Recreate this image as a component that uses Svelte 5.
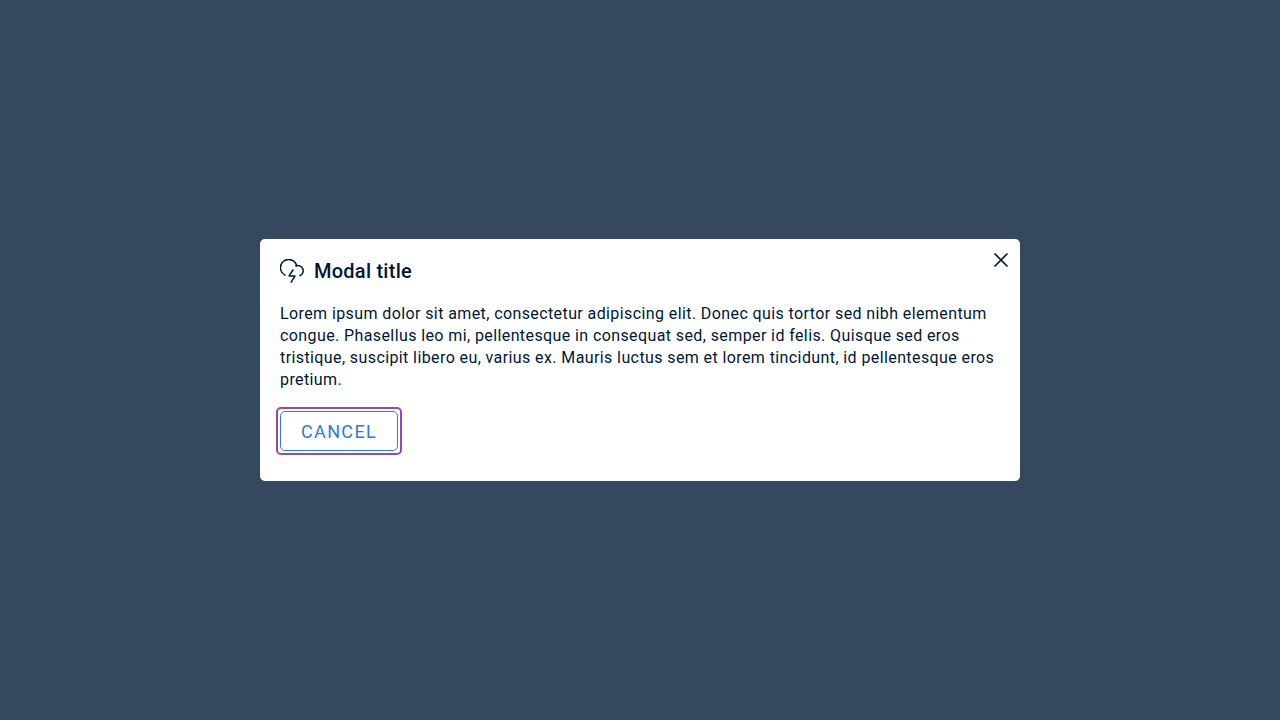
<script>
  let open = $state(true);
  const close = () => (open = false);
</script>

<div class="overlay">
  {#if open}
    <div class="modal" role="dialog" aria-modal="true" aria-labelledby="modal-title">
      <button class="close" type="button" aria-label="Close" onclick={close}>
        <svg width="24" height="24" viewBox="0 0 24 24" fill="none" stroke="currentColor" stroke-width="1.7" stroke-linecap="round">
          <path d="M6 6 18 18M18 6 6 18" />
        </svg>
      </button>
      <header>
        <svg width="24" height="24" viewBox="0 0 24 24" fill="none" stroke="currentColor" stroke-width="1.5" stroke-linecap="round" stroke-linejoin="round" aria-hidden="true">
          <path d="M5 16.1A8.25 8.25 0 1 1 16.7 6.9" />
          <path d="M15.8 6.9A5.2 5.2 0 1 1 20 16.6" />
          <path d="M13 11 9.1 16.9H15L11.2 23.1" />
        </svg>
        <h1 id="modal-title">Modal title</h1>
      </header>
      <p>
        Lorem ipsum dolor sit amet, consectetur adipiscing elit. Donec quis tortor sed nibh elementum
        congue. Phasellus leo mi, pellentesque in consequat sed, semper id felis. Quisque sed eros
        tristique, suscipit libero eu, varius ex. Mauris luctus sem et lorem tincidunt, id
        pellentesque eros pretium.
      </p>
      <button class="cancel" type="button" onclick={close}>CANCEL</button>
    </div>
  {/if}
</div>

<style>
  .overlay {
    box-sizing: border-box;
    min-height: 100vh;
    padding: 20px;
    display: flex;
    align-items: center;
    justify-content: center;
    background: #364760;
    color: #001738;
    font-family: Roboto, sans-serif;
  }

  .modal {
    position: relative;
    box-sizing: border-box;
    width: 100%;
    max-width: 760px;
    padding: 20px 20px 30px;
    border-radius: 5px;
    background: #fff;
  }

  header {
    display: flex;
    gap: 10px;
    margin-bottom: 20px;
  }

  h1 {
    margin: 0;
    font-size: 20px;
    font-weight: 500;
    line-height: 24px;
    letter-spacing: 0.0125em;
  }

  p {
    margin: 0 0 20px;
    font-size: 16px;
    line-height: 22px;
    letter-spacing: 0.025em;
  }

  button {
    font-family: inherit;
    cursor: pointer;
  }

  .close {
    position: absolute;
    top: 9px;
    right: 7px;
    display: flex;
    padding: 0;
    border: 0;
    background: none;
    color: inherit;
  }

  .cancel {
    position: relative;
    display: block;
    height: 40px;
    padding: 2px 20px 0;
    border: 1px solid #2c7be5;
    border-radius: 5px;
    background: #fff;
    color: #2c7be5;
    font-size: 18px;
    line-height: 36px;
    letter-spacing: 0.075em;
  }

  .cancel::after {
    content: '';
    position: absolute;
    inset: -5px;
    border: 2px solid #9845b8;
    border-radius: 5px;
  }
</style>
